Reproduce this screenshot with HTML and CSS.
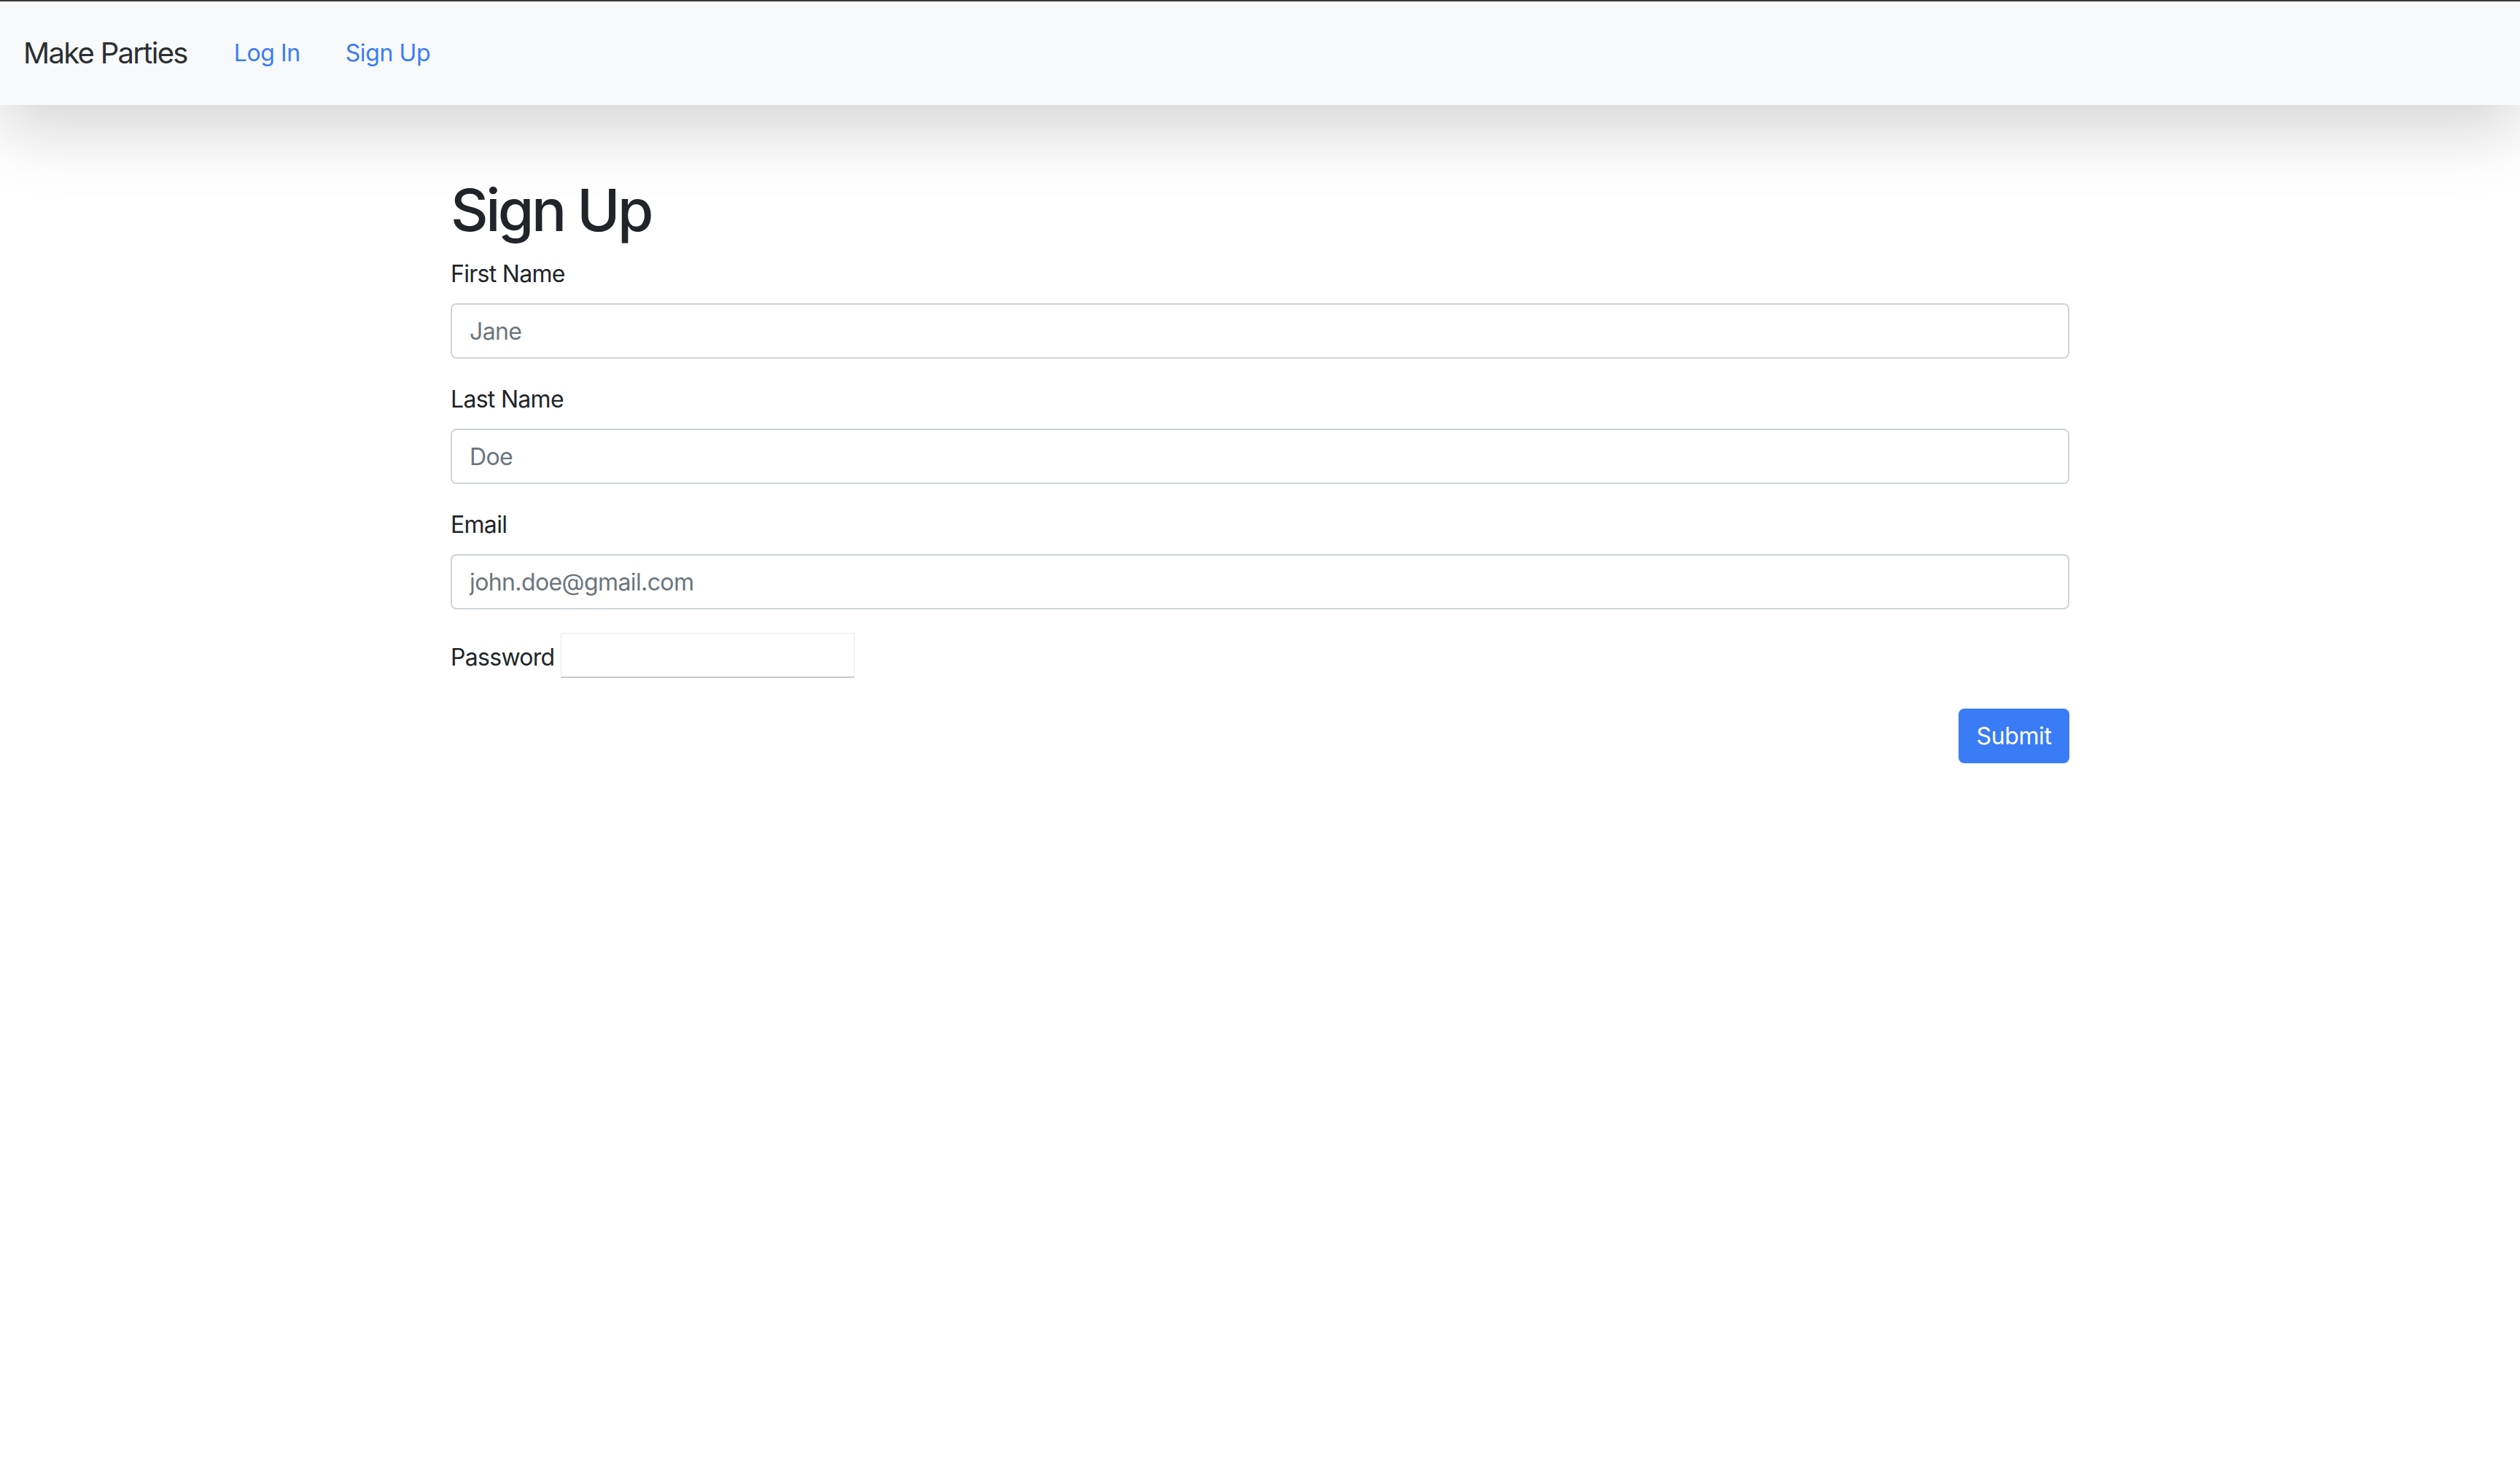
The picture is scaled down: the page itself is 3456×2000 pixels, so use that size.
FILE: index.html
```html
<!DOCTYPE html>
<html>

<head>
    <title>Make Parties</title>
    <meta charset="UTF-8">
    <meta name="viewport" content="width=device-width, initial-scale=1">
    <link rel="stylesheet" href="styles.css">
</head>

<body>
    <nav class="navbar">
        <a class="navbar-brand" href="#">Make Parties</a>
        <ul class="nav-links">
            <li><a class="nav-link" href="#">Log In</a></li>
            <li><a class="nav-link" href="#">Sign Up</a></li>
        </ul>
    </nav>

    <main class="container">
        <h1 class="page-title">Sign Up</h1>
        <form class="signup-form" method="post" autocomplete="off">
            <div class="form-group">
                <label for="firstName" class="form-label">First Name</label>
                <input type="text" class="form-control" id="firstName" name="first_name" placeholder="Jane">
            </div>

            <div class="form-group">
                <label for="lastName" class="form-label">Last Name</label>
                <input type="text" class="form-control" id="lastName" name="last_name" placeholder="Doe">
            </div>

            <div class="form-group">
                <label for="email" class="form-label">Email</label>
                <input type="email" class="form-control" id="email" name="email" placeholder="john.doe@gmail.com">
            </div>

            <div class="password-row">
                <label for="password">Password</label>
                <input type="password" class="plain-input" id="password" name="password">
            </div>

            <div class="form-actions">
                <button type="submit" class="button">Submit</button>
            </div>
        </form>
    </main>
</body>

</html>
```

FILE: styles.css
```css
html {
    background-color: #fff;
}

body {
    margin: 0;
    padding: 0;
    font-family: Inter, "Noto Sans", sans-serif;
    font-size: 32px;
    line-height: 1.5;
    color: #212529;
    border-top: 2px solid #3a3a3a;
}

a {
    text-decoration: none;
}

.navbar {
    display: flex;
    align-items: center;
    height: 142px;
    padding: 0 32px;
    background-color: #f8f9fa;
    box-shadow: 0 32px 96px rgba(0, 0, 0, 0.175);
    position: relative;
}

.navbar-brand {
    font-size: 40px;
    color: #2b2f33;
    margin-right: 33px;
    letter-spacing: -1.7px;
}

.nav-links {
    display: flex;
    list-style: none;
    margin: 0;
    padding: 0;
}

.nav-link {
    display: block;
    padding: 0 31px;
    color: #3a7cf5;
    letter-spacing: -0.4px;
}

.container {
    width: 2220px;
    margin: 96px auto 0;
}

.page-title {
    font-size: 80px;
    font-weight: 500;
    line-height: 1.2;
    margin: 0 0 16px;
    letter-spacing: -3.5px;
}

.form-group {
    margin-bottom: 32px;
}

.form-label {
    display: block;
    margin-bottom: 16px;
    letter-spacing: -0.7px;
}

.form-control {
    display: block;
    box-sizing: border-box;
    width: 100%;
    height: 76px;
    padding: 0 24px;
    font-family: inherit;
    font-size: 32px;
    color: #212529;
    background-color: #fff;
    border: 2px solid #ced4da;
    border-radius: 8px;
    outline: none;
}

.form-control::placeholder {
    color: #6c757d;
    letter-spacing: -0.6px;
}

.password-row {
    display: flex;
    align-items: flex-end;
    gap: 8px;
    letter-spacing: -0.7px;
}

.password-row label {
    line-height: 1;
    margin-bottom: 12px;
}

.plain-input {
    box-sizing: border-box;
    width: 403px;
    height: 62px;
    border: 1px solid #e9e9e9;
    border-bottom: 2px solid #c9c9c9;
    background-color: #fff;
    outline: none;
}

.form-actions {
    display: flex;
    justify-content: flex-end;
    margin-top: 42px;
}

.button {
    font-family: inherit;
    width: 152px;
    height: 75px;
    font-size: 32px;
    color: #fff;
    background-color: #3a7cf5;
    border: none;
    border-radius: 8px;
    cursor: pointer;
    letter-spacing: -0.4px;
}

.button:hover {
    background-color: #2f6ad8;
}
```
